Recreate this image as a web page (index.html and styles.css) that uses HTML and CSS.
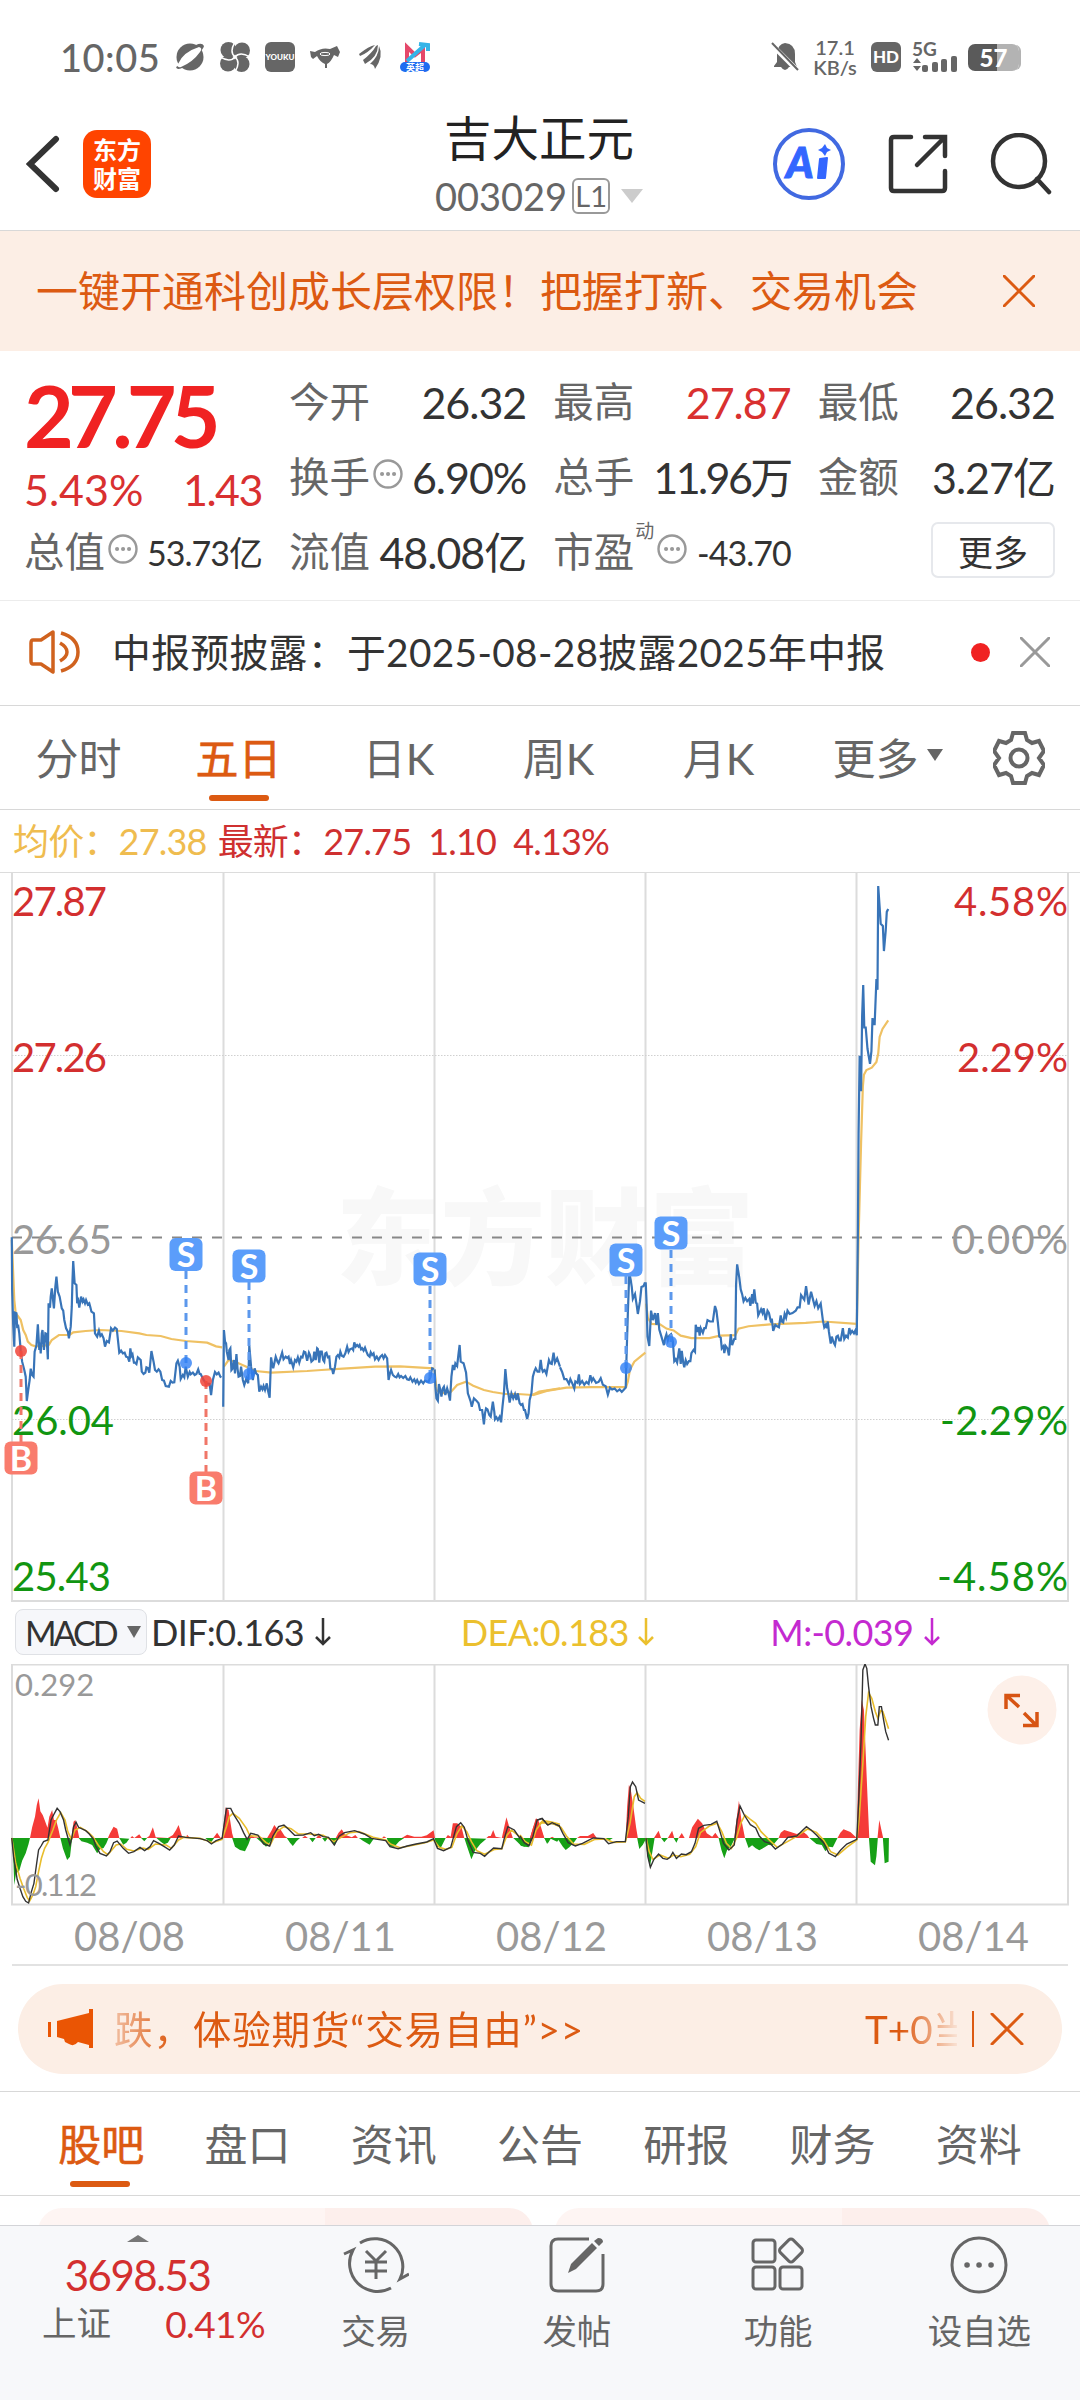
FILE: index.html
```html
<!DOCTYPE html>
<html lang="zh-CN">
<head>
    <meta charset="UTF-8">
    <meta name="viewport" content="width=device-width, initial-scale=1.0">
    <title>吉大正元 003029</title>
    <link rel="stylesheet" href="styles.css">
</head>
<body>
    <div class="statusbar">
        <div class="status-left">
            <span class="time">10:05</span>
            <svg class="sicon" viewBox="0 0 30 30"><circle cx="15" cy="15" r="13.5"/><path d="M3 24 L21 3 Q27 0 29 4 Q28 9 9 25 Q2 29 1 25 Z" fill="#666"/><path d="M3 22 Q8 10 24 5 Q28 6 25 10 Q18 20 6 25 Q2 26 3 22Z" fill="#fff"/></svg>
            <svg class="sicon" viewBox="0 0 30 30"><circle cx="8.5" cy="8" r="8"/><circle cx="22" cy="8.5" r="8"/><circle cx="21.500" cy="22" r="8"/><circle cx="8" cy="21.500" r="8"/><path d="M15 15 Q9 10 15 0 M15 15 Q20 9 30 15 M15 15 Q21 20 15 30 M15 15 Q10 21 0 15" fill="none" stroke="#fff" stroke-width="1.500"/></svg>
            <span class="youku">YOUKU</span>
            <svg class="sicon" viewBox="0 0 30 30"><path d="M0 9 L5 10 Q12 5 20 7 L27 4 L30 10 L28 15 L24 13 Q21 20 17 22 L17 26 H15 V22 Q10 20 7 14 L3 17 L1 15 Z"/><ellipse cx="15" cy="12" rx="5" ry="1.600" fill="none" stroke="#fff"/></svg>
            <svg class="sicon" viewBox="0 0 30 30"><path d="M4 12 Q14 4 20 3 Q13 11 5 14 Z M8 18 Q17 11 21 4 L23 3 Q23 15 10 22 Z M15 22 Q24 14 24 4 Q29 14 20 27 Q19 22 15 22 Z"/></svg>
            <svg class="sicon" viewBox="0 0 30 30"><path d="M7 20 V5 L15 13 L23 7 V20" fill="none" stroke="#e5486a" stroke-width="4"/><path d="M7 19 L25 3 M19 2 L28 3 V9" fill="none" stroke="#35b4e8" stroke-width="4"/><rect x="0" y="20" width="30" height="10" rx="5" fill="#1f6cf0"/><text x="15" y="28.500" class="league">英超</text></svg>
        </div>
        <div class="status-right">
            <svg class="bell" viewBox="0 0 28 30"><path d="M3 24 L6 20 V11 Q7 2 14 1 Q24 2 24 12 V20 L26 25 H18 Q14 31 10 25 H3Z"/><path d="M0 2 L27 29" stroke="#fff" stroke-width="5"/><path d="M1 1 L27 28" stroke="#666" stroke-width="2"/></svg>
            <div class="netspeed"><span>17.1</span><span>KB/s</span></div>
            <span class="hd">HD</span>
            <svg class="signal" viewBox="0 0 46 32"><text x="0" y="14.500">5G</text><path d="M1 22 L5 17 L9 22Z M1 25 H9 L5 30Z"/><rect x="10" y="24" width="6" height="7" rx="2"/><rect x="20" y="21" width="6" height="10" rx="2"/><rect x="29" y="18" width="6" height="13" rx="2"/><rect x="39" y="15" width="6" height="16" rx="2"/></svg>
            <div class="battery"><span>57</span></div>
        </div>
    </div>

    <header class="header">
        <div class="header-side">
            <svg class="back" viewBox="0 0 34 58"><path d="M30 4 L4 29 L30 54"/></svg>
            <div class="logo">东方<br>财富</div>
        </div>
        <div class="stock">
            <h1>吉大正元</h1>
            <div class="code">003029<span class="level">L1</span><i class="tri-down"></i></div>
        </div>
        <div class="header-side header-actions">
            <svg width="74" height="74" viewBox="0 0 74 74"><circle cx="37" cy="37" r="34" fill="none" stroke="#4169e1" stroke-width="4"/><text x="14" y="51" class="ai">A</text><path d="M48 32 L55 31 L53 51 L46 51Z" fill="#3366ff" stroke="#3366ff" stroke-width="2" stroke-linejoin="round"/><path d="M53 17 L55 21 L59 23 L55 25 L53 29 L50 25 L46 23 L50 21Z" fill="#3366ff"/></svg>
            <svg width="60" height="60" viewBox="0 0 60 60" class="line-icon"><path d="M23 3 H6 Q3 3 3 6 V54 Q3 57 6 57 H54 Q57 57 57 54 V37 M37 3 H57 V22 M56 4 L29 31"/></svg>
            <svg width="62" height="62" viewBox="0 0 62 62" class="line-icon"><circle cx="29" cy="28" r="26"/><path d="M47 46 L59 59"/></svg>
        </div>
    </header>

    <div class="banner">
        <span>一键开通科创成长层权限！把握打新、交易机会</span>
        <svg width="32" height="32" viewBox="0 0 32 32" class="close orange"><path d="M1 1 L31 31 M31 1 L1 31"/></svg>
    </div>

    <section class="quote">
        <div class="price-col">
            <div class="price">27.75</div>
            <div class="change"><span>5.43%</span><span>1.43</span></div>
            <div class="cell small"><label>总值</label><svg class="more-dot" viewBox="0 0 30 30"><circle cx="15" cy="15" r="13.500"/><path d="M9 15h.1M15 15h.1M21 15h.1"/></svg><b>53.73亿</b></div>
        </div>
        <div class="stats">
            <div class="cell"><label>今开</label><b>26.32</b></div>
            <div class="cell"><label>最高</label><b class="red">27.87</b></div>
            <div class="cell"><label>最低</label><b>26.32</b></div>
            <div class="cell"><label>换手</label><svg class="more-dot" viewBox="0 0 30 30"><circle cx="15" cy="15" r="13.500"/><path d="M9 15h.1M15 15h.1M21 15h.1"/></svg><b>6.90%</b></div>
            <div class="cell"><label>总手</label><b class="tight">11.96万</b></div>
            <div class="cell"><label>金额</label><b>3.27亿</b></div>
            <div class="cell"><label>流值</label><b>48.08亿</b></div>
            <div class="cell small"><label>市盈</label><sup>动</sup><svg class="more-dot" viewBox="0 0 30 30"><circle cx="15" cy="15" r="13.500"/><path d="M9 15h.1M15 15h.1M21 15h.1"/></svg><b>-43.70</b></div>
            <div class="cell"><button class="more">更多</button></div>
        </div>
    </section>

    <div class="notice">
        <svg width="52" height="46" viewBox="0 0 52 46" class="speaker"><path d="M24 3 L12 11 H4 Q2 11 2 14 V32 Q2 35 4 35 H12 L24 43 Z M31 14 Q38 18 38 23 Q38 28 31 32 M32 4 Q49 9 49 23 Q49 37 32 42"/></svg>
        <span class="notice-text">中报预披露：于2025-08-28披露2025年中报</span>
        <i class="dot"></i>
        <svg width="30" height="30" viewBox="0 0 30 30" class="close"><path d="M1 1 L29 29 M29 1 L1 29"/></svg>
    </div>

    <nav class="periods">
        <a>分时</a>
        <a class="active">五日</a>
        <a>日K</a>
        <a>周K</a>
        <a>月K</a>
        <a class="period-more">更多<i></i></a>
        <svg class="gear" viewBox="0 0 52 54"><path d="M20 2 H32 L34 9 L39 12 L46 10 L51 20 L46 27 L51 34 L46 44 L39 42 L34 45 L32 52 H20 L18 45 L13 42 L6 44 L1 34 L6 27 L1 20 L6 10 L13 12 L18 9 Z"/><circle cx="26" cy="27" r="8.500"/></svg>
    </nav>

    <div class="legend"><span class="avg">均价：27.38</span><span class="last">最新：27.75</span><span>1.10</span><span>4.13%</span></div>

    <!-- five day price chart -->
    <svg class="chart" width="1080" height="731" viewBox="0 872 1080 731">
        <text x="336" y="1276" class="watermark">东方财富</text>
        <path class="grid" d="M0 872.500 H1080"/>
        <path class="grid" stroke-width="2" d="M12 873 V1601 H1068 V873 M223.500 873 V1601 M434.500 873 V1601 M645.500 873 V1601 M856.500 873 V1601"/>
        <path class="dotted" d="M12 1055.500 H1068 M12 1419.500 H1068"/>
        <path class="zero" d="M12 1237.500 H1068"/>

        <g transform="translate(0 1180) scale(.35714 .33333)">
            <polyline class="avg-line" points="33,180 40,360 44,400 50,408 58,420 65,450 72,465 78,485 88,495 100,499 120,498 137,494 145,480 165,465 195,465 205,457 240,453 280,450 340,453 390,460 410,465 450,468 480,477 520,483 580,488 605,499 622,502"/>
            <polyline class="avg-line" points="627,560 640,540 660,546 690,560 715,573 760,578 860,573 900,570 960,566 1050,560 1120,559 1215,565"/>
            <polyline class="avg-line" points="1217,570 1222,630 1235,640 1263,635 1280,615 1305,605 1325,617 1355,630 1380,636 1415,642 1450,642 1490,645 1510,635 1568,625"/>
            <polyline class="price-line" points="33,172 34,330 37,435 40,500 42,398 46,400 48,440 51,438 54,460 58,512 62,545 68,570 72,590 75,663 79,630 83,600 86,566 90,585 94,590 97,515 102,497 106,433 110,510 112,488 114,520 117,460 119,450 123,510 127,460 130,462 134,538 136,370 140,383 142,350 145,325 148,355 151,385 155,320 158,290 162,335 167,350 173,385 177,392 180,420 185,445 190,455 193,475 198,440 201,380 203,300 205,243 209,310 214,315 216,370 219,362 222,383 227,350 231,365 234,358 238,370 241,360 246,374 250,370 253,382 256,395 263,400 266,460 272,470 277,452 281,468 285,463 290,475 294,500 299,483 305,487 311,445 316,452 322,443 327,447 334,518 339,512 344,520 349,518 353,530 358,532 362,545 365,505 368,528 371,523 375,548 378,548 382,552 386,532 394,540 397,575 402,582 407,578 410,562 414,564 418,578 424,513 430,545 434,570 439,575 444,568 449,575 454,600 459,602 464,618 473,620 478,603 483,608 488,607 494,550 498,542 503,560 506,597 512,585 516,592 520,560 526,590 531,576 534,583 540,578 545,585 550,582 555,568 559,582 562,582 570,600 577,610 587,612 591,645 596,600 602,576 607,583 612,578 617,590 620,592"/>
            <polyline class="price-line" points="625,680 627,450 630,485 633,490 635,515 640,540 642,510 645,505 648,570 651,566 655,540 658,580 662,522 665,565 668,590 672,588 675,560 680,600 684,615 687,605 690,595 695,610 698,497 703,560 708,600 713,565 717,580 722,585 726,635 731,620 735,628 738,618 742,630 747,610 750,630 755,653 759,532 762,552 765,565 769,545 772,530 777,545 780,550 785,535 790,518 794,538 800,530 804,534 808,530 812,552 815,540 821,562 826,540 830,545 834,532 838,548 843,530 847,532 851,515 855,517 860,542 865,518 868,525 872,545 877,540 880,515 884,540 888,505 890,507 894,548 897,515 901,515 905,540 908,545 911,520 914,518 918,532 922,530 925,565 930,568 933,582 938,560 942,530 946,525 950,532 953,515 957,527 962,530 967,520 972,500 976,516 980,508 986,505 989,510 992,487 996,500 1000,495 1004,500 1007,495 1011,508 1014,505 1018,512 1022,503 1026,515 1030,525 1035,530 1038,517 1042,525 1046,520 1050,538 1055,530 1060,540 1065,530 1070,525 1074,535 1078,525 1084,535 1088,600 1092,580 1095,570 1100,585 1105,590 1110,592 1115,582 1119,592 1123,588 1129,594 1135,588 1140,598 1145,600 1149,592 1155,605 1160,598 1164,608 1168,600 1173,612 1179,602 1185,610 1190,602 1200,606 1206,585 1210,565 1215,568"/>
            <polyline class="price-line" points="1217,568 1219,620 1222,655 1226,662 1229,612 1233,630 1236,650 1240,625 1243,620 1247,645 1252,625 1256,640 1260,662 1264,590 1268,555 1272,570 1275,550 1280,558 1284,520 1287,495 1290,545 1298,550 1305,578 1310,640 1314,652 1318,665 1321,680 1327,655 1334,662 1340,670 1344,690 1350,690 1355,733 1358,700 1361,685 1365,688 1370,705 1374,710 1380,665 1384,695 1386,718 1390,712 1394,720 1399,710 1403,727 1407,680 1411,640 1415,567 1420,625 1424,645 1427,668 1432,640 1437,655 1442,642 1446,660 1450,640 1455,670 1459,675 1463,672 1467,690 1470,690 1476,717 1480,700 1483,660 1488,640 1492,590 1496,575 1500,565 1505,575 1510,575 1514,540 1517,565 1520,575 1525,570 1530,582 1537,540 1541,550 1545,552 1550,518 1554,548 1560,535 1568,560"/>
        </g>
        <g transform="translate(520 860) scale(.35714 .4719)">
            <polyline class="avg-line" points="36,1134 75,1125 130,1118 200,1117 297,1117 302,1105 308,1080 320,1063 351,1044"/>
            <polyline class="avg-line" points="353,940 358,970 368,983 392,984 410,993 430,997 450,1008 480,1013 530,1013 560,1008 603,1007 612,993 640,988 700,984 800,981 850,978 943,983"/>
            <polyline class="avg-line" points="943,990 948,800 955,600 960,480 963,455 970,445 985,440 998,428 1003,410 1007,375 1015,358 1031,340"/>
            <polyline class="price-line" points="112,1075 118,1085 124,1100 130,1100 137,1110 141,1100 147,1110 152,1120 155,1105 161,1108 165,1090 168,1110 174,1104 180,1112 186,1106 192,1110 197,1092 201,1104 205,1098 213,1108 220,1106 226,1098 232,1112 240,1115 246,1133 252,1118 258,1122 265,1120 272,1126 279,1122 285,1127 290,1123 296,1118 298,1060 302,960 306,875 310,890 313,905 316,930 322,920 327,945 330,962 336,935 340,905 346,903 350,895"/>
            <polyline class="price-line" points="352,895 354,930 357,1010 362,1030 367,955 372,975 378,960 382,985 386,960 390,995 396,1010 403,1028 407,1012 410,1005 414,1018 418,1008 423,1005 428,1020 432,1062 436,1058 440,1065 446,1035 450,1068 453,1040 457,1065 460,1075 464,1060 468,1068 473,1062 477,1062 480,1045 486,1038 490,1042 492,985 496,1000 500,990 503,1008 506,992 512,1002 516,992 520,992 525,975 532,978 540,978 546,945 550,955 554,980 558,1010 562,1012 565,1035 570,1030 572,1045 576,1030 581,1035 585,1050 590,1005 594,1028 600,1015 603,1015 605,900 608,857 614,885 618,910 622,920 626,935 631,928 636,935 642,930 645,945 650,920 652,940 656,910 660,938 664,940 667,965 675,952 679,960 682,950 688,975 693,955 697,960 703,980 705,972 709,998 715,985 720,988 725,990 730,965 733,978 737,980 741,962 745,970 749,955 755,962 763,960 772,955 777,948 783,948 787,922 796,932 801,903 805,925 808,942 815,915 820,930 825,945 830,935 835,950 842,940 848,975 852,990 856,985 859,992 862,978 865,1000 870,1025 873,1010 878,1022 882,1028 886,1010 890,1008 894,1018 898,1018 904,992 908,1015 913,1008 918,1012 922,992 926,1003 930,998 935,1003 939,997 943,1007 946,800 948,580 951,415 955,490 958,330 961,265 964,355 968,355 973,400 980,432 984,405 987,335 990,348 993,348 995,310 998,252 1001,275 1003,55 1007,100 1010,135 1016,140 1019,193 1024,150 1027,110 1031,104"/>
        </g>

        <g class="axis">
            <text x="12" y="916" class="up" textLength="95">27.87</text>
            <text x="12" y="1072" class="up" textLength="95">27.26</text>
            <text x="12" y="1254" class="flat" textLength="100">26.65</text>
            <text x="12" y="1435" class="down" textLength="102">26.04</text>
            <text x="12" y="1591" class="down" textLength="99">25.43</text>
            <text x="954" y="916" class="up" textLength="114">4.58%</text>
            <text x="957" y="1072" class="up" textLength="111">2.29%</text>
            <text x="952" y="1254" class="flat" textLength="116">0.00%</text>
            <text x="940" y="1435" class="down" textLength="128">-2.29%</text>
            <text x="937" y="1591" class="down" textLength="131">-4.58%</text>
        </g>

        <g class="sell">
            <path d="M186 1363 V1270 M249 1374 V1282 M430 1378 V1285 M626 1368 V1276 M671 1342 V1249"/>
            <circle cx="186" cy="1363" r="6"/><circle cx="249" cy="1374" r="6"/><circle cx="430" cy="1378" r="6"/><circle cx="626" cy="1368" r="6"/><circle cx="671" cy="1342" r="6"/>
            <rect x="169.500" y="1238" width="33" height="33" rx="6"/><text x="186" y="1267">S</text>
            <rect x="232.500" y="1249.500" width="33" height="33" rx="6"/><text x="249" y="1278.500">S</text>
            <rect x="413.500" y="1252.500" width="33" height="33" rx="6"/><text x="430" y="1281.500">S</text>
            <rect x="609.500" y="1243.500" width="33" height="33" rx="6"/><text x="626" y="1272.500">S</text>
            <rect x="654.500" y="1216.500" width="33" height="33" rx="6"/><text x="671" y="1245.500">S</text>
        </g>
        <g class="buy">
            <path d="M21 1351 V1442 M206 1381 V1472"/>
            <circle cx="21" cy="1351" r="6"/><circle cx="206" cy="1381" r="6"/>
            <rect x="4.500" y="1441.500" width="33" height="33" rx="6"/><text x="21" y="1470.500">B</text>
            <rect x="189.500" y="1471.500" width="33" height="33" rx="6"/><text x="206" y="1500.500">B</text>
        </g>
    </svg>

    <div class="indicator">
        <button class="ind-btn">MACD<i></i></button>
        <div class="ind dif">DIF:0.163<svg viewBox="0 0 16 28"><path d="M8 0 V26 M1 19 L8 26 L15 19"/></svg></div>
        <div class="ind dea">DEA:0.183<svg viewBox="0 0 16 28"><path d="M8 0 V26 M1 19 L8 26 L15 19"/></svg></div>
        <div class="ind macd">M:-0.039<svg viewBox="0 0 16 28"><path d="M8 0 V26 M1 19 L8 26 L15 19"/></svg></div>
    </div>

    <!-- macd chart -->
    <svg class="chart" width="1080" height="242" viewBox="0 1664 1080 242">
        <path class="grid" stroke-width="2" d="M12 1664.500 H1068 V1904.500 H12 Z M223.500 1664 V1904 M434.500 1664 V1904 M645.500 1664 V1904 M856.500 1664 V1904"/>
        <g transform="translate(0 1590) scale(.35714 .33333)">
            <path class="bar-up" d="M84 744 L90 712 98 680 103 645 108 625 113 664 120 676 125 690 133 713 138 680 146 660 151 690 157 690 163 715 169 744Z M200 744 L206 695 211 690 217 718 222 744Z M302 744 L308 730 318 710 328 716 334 744Z M365 744 L370 738 376 744 390 733 397 744Z M410 744 L418 738 428 712 436 742 470 744 484 735 493 720 500 705 510 740 520 744 524 734 532 744Z M597 744 L608 728 618 744 622 740 628 690 632 652 640 660 650 730 654 744Z M694 744 L702 735 712 742 748 744 760 722 768 705 776 716 785 718 797 738 805 744Z M846 744 L854 737 862 744 885 744 894 733 900 744Z M940 744 L948 728 957 718 966 734 985 742 995 735 1002 744Z M1070 744 L1075 739 1082 744 1125 744 1140 734 1160 740 1180 740 1195 736 1214 721 1218 744Z M1248 744 L1254 735 1262 740 1268 700 1280 700 1292 710 1300 744Z M1362 744 L1368 738 1374 738 1381 720 1388 740 1405 744 1412 710 1418 682 1427 715 1436 744Z M1484 744 L1492 715 1500 686 1507 690 1515 712 1524 744Z"/>
            <path class="bar-down" d="M33 744 L37 800 40 885 45 850 54 842 62 812 72 790 80 762 84 744Z M169 744 L176 775 188 810 196 800 202 744Z M220 744 L228 754 244 758 258 765 272 790 280 778 290 774 298 760 304 744Z M334 744 L345 764 354 758 362 746Z M395 744 L404 754 412 744Z M438 744 L450 755 460 763 470 758 478 744Z M575 744 L590 758 600 744Z M650 744 L658 770 672 780 686 784 696 762 702 744Z M718 744 L730 755 745 770 757 755 762 744Z M803 744 L812 758 820 768 830 754 840 744Z M866 744 L875 757 884 744Z M902 744 L910 755 918 744 928 752 938 765 946 744Z M1005 744 L1016 752 1035 764 1048 744Z M1083 744 L1092 770 1104 770 1118 754 1132 744Z M1217 744 L1222 770 1235 772 1248 744Z M1300 744 L1308 770 1320 808 1330 782 1345 762 1362 746Z M1437 744 L1448 755 1460 768 1480 772 1487 744Z M1524 744 L1534 760 1542 746 1560 755 1568 744Z"/>
            <polyline class="dea-line" points="33,744 44,820 56,865 66,895 76,922 83,933 92,915 100,890 108,845 116,805 125,775 134,758 148,720 158,690 170,668 182,690 190,725 200,748 210,720 225,712 245,725 260,740 275,765 290,785 302,794 325,765 338,762 355,778 375,783 400,774 415,778 435,762 465,765 480,775 500,750 515,742 560,745 595,758 622,748 634,710 642,680 652,670 670,685 690,715 700,738 725,738 745,758 757,764 775,725 795,710 815,716 835,732 865,732 905,736 935,755 955,742 980,728 1005,725 1045,742 1080,750 1095,763 1120,773 1150,767 1190,758 1214,750 1230,772 1248,778 1265,772 1280,730 1293,708 1307,725 1320,755 1335,782 1357,793 1385,778 1405,776 1420,735 1432,720 1450,735 1475,758 1490,745 1504,710 1520,692 1545,696 1568,703"/>
            <polyline class="dif-line" points="33,744 38,800 48,868 56,895 64,920 72,934 80,939 88,905 95,880 102,825 108,780 115,768 122,755 134,750 143,690 150,675 160,655 168,665 178,690 184,720 192,750 196,765 201,745 206,710 213,697 220,712 240,722 250,732 262,748 268,768 280,790 298,798 308,785 318,758 328,753 345,775 360,790 375,785 392,772 405,782 420,770 430,752 445,760 460,770 475,780 488,765 500,738 520,742 560,746 580,752 592,762 605,752 622,745 628,700 634,655 646,655 655,675 670,700 682,728 692,748 702,730 722,735 738,762 755,768 764,738 780,710 795,705 808,718 825,736 850,735 870,728 880,737 892,733 905,740 920,742 936,765 950,738 965,728 993,722 1020,732 1040,745 1080,752 1092,770 1115,776 1140,768 1165,762 1195,756 1214,746 1225,775 1242,782 1262,772 1278,710 1290,698 1300,712 1310,750 1325,787 1345,790 1357,799 1370,785 1382,774 1405,776 1412,745 1422,710 1440,720 1460,752 1480,766 1492,730 1504,690 1518,685 1532,703 1545,700 1568,708"/>
        </g>
        <g transform="translate(520 1590) scale(.35714 .33333)">
            <path class="bar-up" d="M28 744 L36 715 47 684 57 715 68 744Z M84 744 L90 740 96 744 160 744 168 738 190 738 205 729 215 744Z M296 744 L300 650 305 584 310 598 318 655 325 712 330 744Z M375 744 L388 722 395 744 414 744 426 722 432 744 444 744 453 729 461 744 473 744 482 712 498 686 510 700 523 730 538 740 547 728 557 744Z M600 744 L606 690 613 632 620 690 630 744Z M724 744 L730 728 740 720 760 727 775 732 793 725 804 735 810 744Z M889 744 L897 728 906 718 925 726 943 744 946 600 951 420 957 330 963 360 968 490 973 620 978 744Z M1001 744 L1006 690 1012 720 1017 744Z"/>
            <path class="bar-down" d="M0 744 L0 765 12 770 26 766 30 744Z M68 744 L76 762 84 744Z M104 744 L120 770 128 780 138 772 152 756 160 744Z M240 744 L248 752 260 744Z M328 744 L334 777 344 764 351 750 356 790 364 830 370 790 377 744Z M395 744 L404 757 414 744Z M430 744 L438 758 444 744Z M556 744 L564 780 572 805 580 780 590 770 602 744Z M630 744 L640 774 650 766 660 775 670 781 685 772 695 765 708 766 725 744Z M810 744 L830 762 845 765 855 784 865 770 876 772 889 744Z M977 744 L982 815 994 826 998 798 1002 744Z M1016 744 L1021 820 1032 815 1033 744Z"/>
            <polyline class="dea-line" points="0,735 15,755 32,765 45,720 60,698 90,700 115,712 130,738 150,762 180,763 210,748 240,747 260,757 295,756 308,700 320,620 328,608 338,625 350,634"/>
            <polyline class="dea-line" points="353,744 362,785 372,808 392,795 415,805 430,795 450,800 475,793 492,770 505,728 530,708 552,700 565,725 578,760 592,775 606,745 618,700 630,675 645,688 660,700 675,725 700,752 720,772 740,760 770,742 805,717 830,727 850,750 870,785 890,795 915,772 943,750 950,680 960,520 968,380 976,308 985,325 995,365 1002,385 1010,362 1016,365 1024,390 1032,416"/>
            <polyline class="dif-line" points="0,738 12,758 25,767 36,740 48,690 62,686 78,705 90,698 110,708 120,730 135,758 155,768 175,760 205,744 235,746 248,761 270,755 295,755 303,680 309,590 315,576 324,590 332,630 350,640"/>
            <polyline class="dif-line" points="353,744 358,800 365,832 375,808 388,792 400,805 412,808 420,802 428,787 438,805 452,792 465,794 480,785 490,760 500,715 515,706 535,703 551,694 560,725 570,760 585,780 600,765 608,690 616,648 628,675 645,704 660,714 670,738 685,755 700,760 715,777 735,762 750,742 775,738 790,722 802,710 815,720 830,735 850,758 865,790 883,800 898,780 915,762 943,748 948,640 955,450 960,240 966,222 971,235 976,290 983,350 990,385 995,405 1002,405 1006,350 1012,350 1018,390 1024,425 1032,451"/>
        </g>
        <g class="macd-axis"><text x="15" y="1696">0.292</text><text x="15" y="1896" textLength="82">-0.112</text></g>
        <circle cx="1022" cy="1710" r="34.500" fill="#fdf0e9"/>
        <path d="M1019 1707 L1006 1695 M1006 1709 V1695.500 H1020 M1024 1713 L1036 1725 M1037 1712 V1725.500 H1023" fill="none" stroke="#d75413" stroke-width="3.500"/>
    </svg>

    <div class="dates"><span>08/08</span><span>08/11</span><span>08/12</span><span>08/13</span><span>08/14</span></div>

    <div class="promo">
        <svg class="horn" width="46" height="40" viewBox="0 0 46 40"><path d="M0 13 H3 V28 H0Z M9 12 L41 4 V0 H45 V39 H41 V36 L30 33 Q26 38 21 35 L17 33 L16 30 L9 28Z"/></svg>
        <div class="promo-text"><span>跌，体验期货“交易自由”&gt;&gt;</span><span>T+0当天</span></div>
        <i class="bar"></i>
        <svg width="34" height="32" viewBox="0 0 32 32" class="close orange"><path d="M1 1 L31 31 M31 1 L1 31"/></svg>
    </div>

    <nav class="sections">
        <a class="active">股吧</a><a>盘口</a><a>资讯</a><a>公告</a><a>研报</a><a>财务</a><a>资料</a>
    </nav>

    <div class="cards"><div></div><div></div></div>

    <footer class="bottom">
        <div class="index">
            <i></i>
            <div class="index-value">3698.53</div>
            <div class="index-row"><span>上证</span><b>0.41%</b></div>
        </div>
        <a><svg viewBox="0 0 66 60"><path d="M17 8 A28 28 0 0 1 57 44 L66 39 M48 53 A28 28 0 0 1 10 15 L1 19"/><path d="M23 16 L33 26 L43 16 M22 27 H44 M22 36 H44 M33 26 V44"/></svg>交易</a>
        <a><svg viewBox="0 0 66 60"><path d="M45 4 H14 Q7 4 7 11 V49 Q7 56 14 56 H52 Q59 56 59 49 V19"/><path d="M24 38 L27 29 L48 8 L53 13 L32 34Z M50 6 L54 3 Q59 3 59 7 L55 11Z" fill="#666" stroke="none"/></svg>发帖</a>
        <a><svg viewBox="0 0 66 60"><rect x="8" y="5" width="22" height="22" rx="3"/><rect x="8" y="32" width="22" height="22" rx="3"/><rect x="35" y="32" width="22" height="22" rx="3"/><rect x="37" y="6.500" width="18" height="18" rx="3" transform="rotate(45 46 15.500)"/></svg>功能</a>
        <a><svg viewBox="0 0 66 60"><circle cx="33" cy="30" r="27"/><path d="M21 30h.1M33 30h.1M45 30h.1" stroke-width="5.500" stroke-linecap="round"/></svg>设自选</a>
    </footer>
</body>
</html>
```
FILE: styles.css
```css
* {
    box-sizing: border-box;
}

body {
    margin: 0;
    width: 1080px;
    height: 2400px;
    overflow: hidden;
    display: flex;
    flex-direction: column;
    background: #fff;
    color: #333;
    font-family: Lato, "Noto Sans CJK SC", sans-serif;
    font-size: 40px;
    line-height: 1;
}

body > * {
    flex-shrink: 0;
}

svg {
    display: block;
    flex-shrink: 0;
}

button {
    font-family: inherit;
    color: inherit;
}

i {
    display: block;
    flex-shrink: 0;
}

/* status bar */
.statusbar {
    height: 104px;
    padding: 10px 61px 0 60px;
    display: flex;
    justify-content: space-between;
    align-items: center;
    color: #666;
    fill: #666;
}

.status-left,
.status-right {
    display: flex;
    align-items: center;
    gap: 15px;
}

.time {
    width: 100px;
    font-size: 38px;
    font-weight: 500;
    letter-spacing: 0.5px;
}

.sicon {
    width: 30px;
    height: 30px;
}

.youku,
.hd {
    width: 30px;
    height: 30px;
    border-radius: 6px;
    background: #666;
    color: #fff;
    font-size: 8px;
    font-weight: 900;
    line-height: 30px;
    text-align: center;
}

.hd {
    font-size: 17px;
    margin-right: -4px;
}

.league {
    font-size: 9px;
    font-weight: 700;
    fill: #fff;
    text-anchor: middle;
}

.bell {
    width: 28px;
    height: 30px;
}

.netspeed {
    width: 42px;
    display: flex;
    flex-direction: column;
    align-items: center;
    font-size: 20px;
    font-weight: 600;
    line-height: 20px;
}

.signal {
    width: 46px;
    height: 32px;
    overflow: visible;
}

.signal text {
    font-size: 19px;
    font-weight: 700;
}

.battery {
    width: 51px;
    height: 27px;
    margin-left: -5px;
    border-radius: 7px;
    background: linear-gradient(90deg, #5a5a5a 57%, #b3b3b3 57%);
    color: #fff;
    font-size: 24px;
    font-weight: 900;
    line-height: 27px;
    text-align: center;
    box-shadow: 3px 0 0 -1px #b3b3b3;
}

/* header */
.header {
    height: 127px;
    padding: 2px 28px 8px 26px;
    display: flex;
    justify-content: space-between;
    align-items: center;
    border-bottom: 1px solid #d8d8d8;
}

.header-side {
    width: 280px;
    display: flex;
    align-items: center;
}

.back {
    width: 34px;
    height: 58px;
    margin-right: 23px;
    fill: none;
    stroke: #333;
    stroke-width: 6;
    stroke-linecap: round;
}

.logo {
    width: 68px;
    height: 68px;
    padding-top: 5px;
    border-radius: 14px;
    background: #ff4400;
    color: #fff;
    font-size: 24px;
    font-weight: 700;
    line-height: 29px;
    text-align: center;
}

.stock {
    display: flex;
    flex-direction: column;
    align-items: center;
}

h1 {
    margin: 0;
    font-size: 47.5px;
    font-weight: 400;
    line-height: 56px;
    color: #222;
}

.code {
    height: 46px;
    margin-top: 7px;
    display: flex;
    align-items: center;
    font-size: 38px;
    color: #666;
}

.level {
    width: 38px;
    height: 36px;
    margin: 0 11px 0 5px;
    border: 2px solid #999;
    border-radius: 6px;
    font-size: 29px;
    line-height: 32px;
    text-align: center;
}

.tri-down {
    border: 11px solid transparent;
    border-top: 14px solid #ccc;
    border-bottom: 0;
}

.header-actions {
    justify-content: space-between;
}

.line-icon {
    fill: none;
    stroke: #333;
    stroke-width: 4.5;
    stroke-linecap: round;
}

.ai {
    font-size: 42px;
    font-weight: 900;
    font-style: italic;
    fill: #3366ff;
    stroke: #3366ff;
}

/* banner */
.banner {
    height: 120px;
    padding: 0 45px 0 36px;
    display: flex;
    align-items: center;
    justify-content: space-between;
    background: #fceee5;
    color: #dc5a12;
    font-size: 42px;
}

.close {
    fill: none;
    stroke: #999;
    stroke-width: 3;
    stroke-linecap: round;
}

.close.orange {
    stroke: #dc5a12;
}

/* quote */
.quote {
    height: 250px;
    padding: 14px 25px 0 24px;
    display: flex;
    gap: 27px;
    border-bottom: 1px solid #ececec;
}

.price-col {
    width: 238px;
}

.price {
    height: 86px;
    font-size: 86px;
    font-weight: 700;
    line-height: 99px;
    letter-spacing: -5.8px;
    color: #f02222;
}

.change {
    height: 64px;
    padding-top: 12px;
    display: flex;
    justify-content: space-between;
    align-items: center;
    font-size: 43px;
    color: #d93030;
}

.change span:last-child {
    letter-spacing: -1.5px;
}

.stats {
    flex: 1;
    height: 225px;
    display: grid;
    grid-template-columns: repeat(3, 1fr);
    grid-template-rows: repeat(3, 75px);
    column-gap: 27px;
}

.cell {
    height: 75px;
    display: flex;
    align-items: center;
    white-space: nowrap;
}

.cell label {
    font-size: 40.5px;
    color: #666;
}

.cell b {
    margin-left: auto;
    font-size: 43px;
    font-weight: 400;
    letter-spacing: -1px;
}

.cell b.tight {
    letter-spacing: -2.6px;
}

.cell.small b {
    font-size: 34px;
    letter-spacing: -1px;
}

.cell b.red {
    color: #d93030;
}

.cell sup {
    margin: -44px 0 0 1px;
    font-size: 19px;
    color: #666;
}

.more-dot {
    width: 30px;
    height: 30px;
    margin: -8px 0 0 3px;
    fill: none;
    stroke: #999;
    stroke-width: 2.4;
}

.more-dot path {
    stroke-width: 4;
    stroke-linecap: round;
}

.more {
    width: 124px;
    height: 56px;
    margin: -5px 0 0 auto;
    padding: 0;
    border: 2px solid #e6e8ec;
    border-radius: 7px;
    background: #fff;
    font-size: 35px;
}

/* notice */
.notice {
    height: 105px;
    padding: 0 30px 2px 29px;
    display: flex;
    align-items: center;
    border-bottom: 1px solid #d8d8d8;
}

.speaker {
    fill: none;
    stroke: #d0621e;
    stroke-width: 3.5;
    stroke-linejoin: round;
}

.notice-text {
    margin-left: 31px;
    font-size: 38.8px;
    letter-spacing: 0.35px;
}

.dot {
    width: 19px;
    height: 19px;
    margin: 0 30px 0 auto;
    border-radius: 50%;
    background: #f02222;
}

/* period tabs */
.periods {
    height: 104px;
    padding-right: 35px;
    display: flex;
    align-items: center;
    border-bottom: 1px solid #d8d8d8;
    font-size: 43px;
    color: #666;
}

.periods a {
    width: 160px;
    height: 100%;
    padding: 1px 3px 0 0;
    display: flex;
    align-items: center;
    justify-content: center;
}

.periods .active,
.sections .active {
    position: relative;
    color: #dc5a12;
    -webkit-text-stroke: 0.6px #dc5a12;
}

.active::after {
    content: '';
    position: absolute;
    bottom: 8px;
    left: 50%;
    width: 60px;
    height: 6px;
    margin-left: -31px;
    border-radius: 3px;
    background: #dc5a12;
}

.periods .period-more {
    width: 178px;
}

.period-more i {
    margin: -6px 0 0 8px;
    border: 8px solid transparent;
    border-top: 12px solid #666;
    border-bottom: 0;
}

.gear {
    width: 52px;
    height: 54px;
    margin-left: auto;
    fill: none;
    stroke: #666;
    stroke-width: 4;
}

.legend {
    height: 62px;
    padding-left: 13px;
    display: flex;
    align-items: center;
    font-size: 36px;
    color: #cf3030;
    letter-spacing: -0.8px;
}

.legend span {
    margin-right: 17px;
}

.legend .avg {
    margin-right: 11px;
    color: #efbc4f;
}

/* charts */
.grid {
    fill: none;
    stroke: #dcdcdc;
}

.dotted {
    stroke: #d0d0d0;
    stroke-dasharray: 1.5 1.5;
}

.zero {
    stroke: #888;
    stroke-width: 2;
    stroke-dasharray: 10 10;
}

.watermark {
    font-size: 104.5px;
    font-weight: 900;
    fill: #f8f8f8;
}

.price-line,
.avg-line,
.dif-line,
.dea-line {
    fill: none;
    stroke: #3874b8;
    stroke-width: 2.2;
    vector-effect: non-scaling-stroke;
}

.avg-line {
    stroke: #efc163;
}

.dif-line {
    stroke: #333;
    stroke-width: 1.4;
}

.dea-line {
    stroke: #e8bd2c;
    stroke-width: 1.6;
}

.bar-up {
    fill: #f53b38;
}

.bar-down {
    fill: #16a016;
}

.axis text {
    font-size: 40px;
}

.up {
    fill: #d32f2f;
}

.down {
    fill: #119511;
}

.flat {
    fill: #999;
}

.macd-axis text {
    font-size: 31px;
    fill: #999;
}

.sell path,
.buy path {
    fill: none;
    stroke: #5c98ec;
    stroke-width: 3;
    stroke-dasharray: 8 6;
}

.sell rect {
    fill: #5b9dfa;
}

.sell circle {
    fill: #2f80f5;
    opacity: 0.8;
}

.sell text,
.buy text {
    font-size: 34px;
    font-weight: 700;
    fill: #fff;
    text-anchor: middle;
}

.buy path {
    stroke: #f07668;
}

.buy rect {
    fill: #f97c6d;
}

.buy circle {
    fill: #f04438;
    opacity: 0.85;
}

.indicator {
    height: 61px;
    padding: 0 0 3px 15px;
    display: flex;
    align-items: center;
    font-size: 36px;
    letter-spacing: -0.6px;
}

.ind-btn {
    width: 132px;
    height: 46px;
    margin-right: 4px;
    padding: 0 0 0 9px;
    display: flex;
    align-items: center;
    border: 1px solid #dfe1e5;
    border-radius: 8px;
    background: #f6f7fa;
    font-size: 34px;
    letter-spacing: -3px;
}

.ind-btn i {
    margin-left: 11px;
    border: 7px solid transparent;
    border-top: 12px solid #666;
    border-bottom: 0;
}

.ind {
    flex: 1;
    display: flex;
    align-items: center;
}

.ind svg {
    width: 16px;
    height: 28px;
    margin-left: 11px;
    fill: none;
    stroke: currentColor;
    stroke-width: 2.5;
}

.dea {
    color: #ebc02e;
}

.dea svg {
    margin-left: 9px;
}

.macd {
    color: #c42ad0;
}

.dates {
    height: 60px;
    margin: 0 12px;
    padding: 2px 0 0 12px;
    display: grid;
    grid-template-columns: repeat(5, 211px);
    align-items: center;
    border-bottom: 2px solid #e2e2e2;
    color: #999;
    text-align: center;
}

/* promo */
.promo {
    height: 90px;
    margin: 18px 18px 17px;
    padding: 0 38px 0 30px;
    display: flex;
    align-items: center;
    border-radius: 45px;
    background: #fceee5;
    color: #dc5a12;
    font-size: 38.6px;
}

.horn {
    fill: #ea5504;
}

.promo-text {
    width: 846px;
    margin-left: 18px;
    padding-left: 2px;
    display: flex;
    justify-content: space-between;
    overflow: hidden;
    white-space: nowrap;
    line-height: 60px;
    letter-spacing: 0.8px;
    -webkit-mask-image: linear-gradient(90deg, rgba(0, 0, 0, 0.3), #000 60px, #000 790px, transparent 850px);
    mask-image: linear-gradient(90deg, rgba(0, 0, 0, 0.3), #000 60px, #000 790px, transparent 850px);
}

.promo-text span:last-child {
    width: 92px;
    letter-spacing: 0;
}

.promo .bar {
    width: 2px;
    height: 36px;
    margin: 0 16px 0 15px;
    background: #dc5a12;
}

/* section tabs */
.sections {
    height: 105px;
    padding: 2px 28px 0;
    display: flex;
    border-top: 1px solid #d8d8d8;
    border-bottom: 1px solid #d8d8d8;
    font-size: 43px;
    color: #666;
}

.sections a {
    flex: 1;
    display: flex;
    align-items: center;
    justify-content: center;
}

.cards {
    height: 29px;
    padding: 12px 30px 0 38px;
    display: flex;
    gap: 22px;
    overflow: hidden;
}

.cards div {
    flex: 1;
    height: 60px;
    border-radius: 24px;
    background: linear-gradient(90deg, #fef5f3 58%, #fdefec 58%);
}

/* bottom bar */
.bottom {
    flex: 1;
    display: flex;
    border-top: 1px solid #d3d4d8;
    background: #f7f8fa;
    color: #666;
}

.index {
    width: 275px;
    padding-top: 9px;
    display: flex;
    flex-direction: column;
    align-items: center;
}

.index i {
    border: 11px solid transparent;
    border-top: 0;
    border-bottom: 7px solid #777;
}

.index-value {
    margin-top: 12px;
    font-size: 42px;
    letter-spacing: -1.5px;
    color: #d32f2f;
}

.index-row {
    width: 223px;
    margin: 9px 0 0 42px;
    display: flex;
    align-self: flex-start;
    justify-content: space-between;
    align-items: center;
    font-size: 34.5px;
}

.index-row b {
    font-size: 37px;
    font-weight: 400;
    letter-spacing: -0.6px;
    color: #d32f2f;
}

.bottom a {
    flex: 1;
    padding-top: 9px;
    display: flex;
    flex-direction: column;
    align-items: center;
    font-size: 34.5px;
}

.bottom a svg {
    width: 66px;
    height: 60px;
    margin-bottom: 19px;
    fill: none;
    stroke: #666;
    stroke-width: 3;
}
```
